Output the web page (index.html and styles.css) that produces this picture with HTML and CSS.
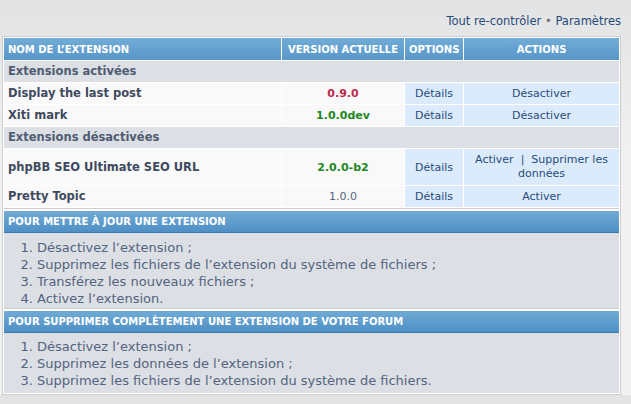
FILE: index.html
```html
<!DOCTYPE html>
<html lang="fr">
<head>
    <meta charset="UTF-8">
    <title>Gérer les extensions</title>
    <link rel="stylesheet" href="styles.css">
</head>
<body>
    <div class="toplinks"><a href="#">Tout re-contrôler</a> <span class="bullet">&bull;</span> <a href="#">Paramètres</a></div>

    <div class="panel">
        <table class="ext">
            <colgroup>
                <col class="c-name">
                <col class="c-version">
                <col class="c-options">
                <col class="c-actions">
            </colgroup>
            <thead>
                <tr>
                    <th class="left">Nom de l’extension</th>
                    <th>Version actuelle</th>
                    <th>Options</th>
                    <th>Actions</th>
                </tr>
            </thead>
            <tbody>
                <tr class="group"><td colspan="4">Extensions activées</td></tr>
                <tr>
                    <td class="name">Display the last post</td>
                    <td class="ver old">0.9.0</td>
                    <td class="opt"><a href="#">Détails</a></td>
                    <td class="act"><a href="#">Désactiver</a></td>
                </tr>
                <tr>
                    <td class="name">Xiti mark</td>
                    <td class="ver current">1.0.0dev</td>
                    <td class="opt"><a href="#">Détails</a></td>
                    <td class="act"><a href="#">Désactiver</a></td>
                </tr>
                <tr class="group"><td colspan="4">Extensions désactivées</td></tr>
                <tr>
                    <td class="name">phpBB SEO Ultimate SEO URL</td>
                    <td class="ver current">2.0.0-b2</td>
                    <td class="opt"><a href="#">Détails</a></td>
                    <td class="act wrap"><a href="#">Activer</a>&nbsp;&nbsp;|&nbsp;&nbsp;<a href="#">Supprimer les</a><br><a href="#">données</a></td>
                </tr>
                <tr>
                    <td class="name">Pretty Topic</td>
                    <td class="ver">1.0.0</td>
                    <td class="opt"><a href="#">Détails</a></td>
                    <td class="act"><a href="#">Activer</a></td>
                </tr>
            </tbody>
        </table>

        <div class="box">
            <h3>Pour mettre à jour une extension</h3>
            <ol>
                <li>Désactivez l’extension ;</li>
                <li>Supprimez les fichiers de l’extension du système de fichiers ;</li>
                <li>Transférez les nouveaux fichiers ;</li>
                <li>Activez l’extension.</li>
            </ol>
        </div>

        <div class="box last">
            <h3>Pour supprimer complètement une extension de votre forum</h3>
            <ol>
                <li>Désactivez l’extension ;</li>
                <li>Supprimez les données de l’extension ;</li>
                <li>Supprimez les fichiers de l’extension du système de fichiers.</li>
            </ol>
        </div>
    </div>
</body>
</html>
```

FILE: styles.css
```css
body{
    margin: 0;
    padding: 14px 0 0 2px;
    background: linear-gradient(#e2e3e4, #f1f1f1 160px);
    font-family: "DejaVu Sans", Verdana, sans-serif;
    font-size: 11px;
    color: #536482;
}
a{
    color: #274b7a;
    text-decoration: none;
}
.toplinks{
    width: 619px;
    text-align: right;
    font-size: 11.5px;
    line-height: 14px;
    margin-bottom: 8px;
}
.toplinks .bullet{
    color: #777;
}
.panel{
    width: 617px;
    background: #fff;
    border: 1px solid #cdcdcd;
}
table.ext{
    width: 617px;
    table-layout: fixed;
    border-collapse: separate;
    border-spacing: 1px;
}
col.c-name{ width: 277px; }
col.c-version{ width: 122px; }
col.c-options{ width: 58px; }
col.c-actions{ width: 155px; }

table.ext th{
    height: 22px;
    padding: 0 4px;
    background: linear-gradient(#72acd6, #5797c9);
    color: #fff;
    font-size: 10px;
    font-weight: bold;
    text-transform: uppercase;
    text-align: center;
    white-space: nowrap;
}
table.ext th.left{
    text-align: left;
}
table.ext td{
    padding: 4px;
    height: 13px;
    line-height: 13px;
    background: #f9f9f9;
}
table.ext tr.group td{
    background: #dcdfe3;
    color: #4f5c73;
    font-size: 11.5px;
    font-weight: bold;
}
td.name{
    color: #3f4a5f;
    font-size: 11.5px;
    font-weight: bold;
}
td.ver{
    text-align: center;
}
td.ver.old{
    color: #bc2a4d;
    font-weight: bold;
}
td.ver.current{
    color: #228822;
    font-weight: bold;
}
table.ext td.opt,
table.ext td.act{
    background: #dcebfc;
    text-align: center;
    color: #274b7a;
}
table.ext td.act{
    padding: 4px 2px;
}
table.ext td.act.wrap{
    line-height: 14px;
}

.box{
    margin: 0 1px;
    border-top: 1px solid #cdcdcd;
    padding-top: 2px;
}
.box h3{
    margin: 0;
    height: 21px;
    line-height: 21px;
    padding: 0 4px;
    background: linear-gradient(#70abd6, #4f8fc4);
    border-bottom: 1px solid #3c78ab;
    color: #fff;
    font-size: 10px;
    font-weight: bold;
    text-transform: uppercase;
    white-space: nowrap;
}
.box ol{
    margin: 0;
    padding: 6px 0 1px 33px;
    background: #dcdfe3;
    font-size: 13px;
    line-height: 17px;
}
.box.last{
    margin-bottom: 1px;
}
.box.last ol{
    padding: 5px 0 4px 33px;
}
```
